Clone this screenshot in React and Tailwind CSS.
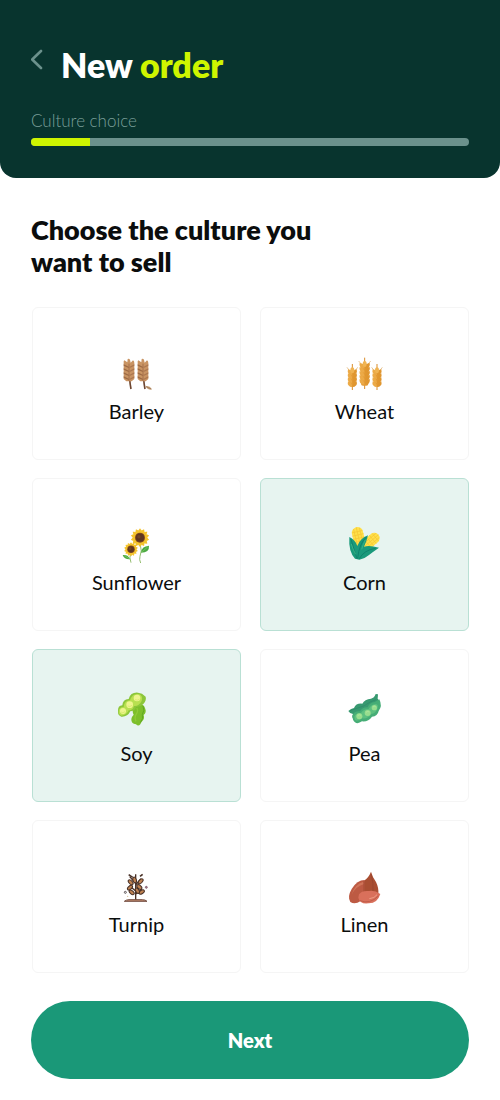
import { useState } from "react";

function CropIcon({ viewBox, children }) {
  return (
    <svg className="h-12 w-10" viewBox={viewBox} fill="none" aria-hidden="true">
      {children}
    </svg>
  );
}

function BarleyHead({ x }) {
  return (
    <g transform={`translate(${x} 0)`}>
      <path d="M0 90 Q1 105 4 120" stroke="#6d4630" strokeWidth="5" />
      <path d="M-18 42 Q-19 36 -16 34 L-7 40 L-6 30 Q-2 27 1 32 L3 41 L10 34 Q14 36 14 42 L14 90 L6 97 L-10 97 L-18 90 Z" fill="#c99463" />
      {[46, 58, 70, 82].map((y) => (
        <g key={y}>
          <path d={`M-18 ${y} L-3 ${y + 7} L-3 ${y + 11} L-18 ${y + 4} Z`} fill="#9d6944" />
          <path d={`M14 ${y} L0 ${y + 7} L0 ${y + 11} L14 ${y + 4} Z`} fill="#ac7750" />
        </g>
      ))}
      <path d="M-2 44 V96" stroke="#94623f" strokeWidth="2" />
    </g>
  );
}

function BarleyIcon() {
  return (
    <CropIcon viewBox="21 -15 120 144">
      <BarleyHead x={59} />
      <BarleyHead x={101} />
      <path d="M106 112 Q118 108 126 121 Q114 125 106 112 Z" fill="#c9a37a" />
      <path d="M108 113 L124 120" stroke="#93694a" strokeWidth="2" />
    </CropIcon>
  );
}

function WheatEar({ x, top, bottom, size }) {
  const rows = [];
  for (let y = top + 20; y < bottom - 8; y += 12) rows.push(y);
  return (
    <g>
      <path d={`M${x} ${top} V${bottom + 8}`} stroke="#d98c2b" strokeWidth="3" />
      <path
        d={`M${x - size - 4} ${top + 10} L${x - 3} ${top + 28} M${x + size + 4} ${top + 10} L${x + 3} ${top + 28}`}
        stroke="#d9a762"
        strokeWidth="2"
      />
      <rect x={x - size + 3} y={top + 18} width={size * 2 - 6} height={bottom - top - 20} rx="6" fill="#e39a35" />
      {rows.map((y) => (
        <g key={y}>
          <path
            d={`M${x} ${y + 13} Q${x - size - 5} ${y + 12} ${x - size - 1} ${y - 4} Q${x - 1} ${y - 2} ${x} ${y + 13} Z`}
            fill="#ecaa47"
          />
          <path
            d={`M${x} ${y + 13} Q${x + size + 5} ${y + 12} ${x + size + 1} ${y - 4} Q${x + 1} ${y - 2} ${x} ${y + 13} Z`}
            fill="#e0962f"
          />
        </g>
      ))}
      <ellipse cx={x} cy={top + 19} rx="6" ry="9" fill="#f0b453" />
    </g>
  );
}

function WheatIcon() {
  return (
    <CropIcon viewBox="25 -15 120 144">
      <WheatEar x={47} top={45} bottom={115} size={12} />
      <WheatEar x={121} top={45} bottom={115} size={12} />
      <WheatEar x={84} top={26} bottom={112} size={14} />
    </CropIcon>
  );
}

function Flower({ x, y, r }) {
  const petals = Array.from({ length: 14 }, (_, i) => (i * 360) / 14);
  return (
    <g transform={`translate(${x} ${y})`}>
      {petals.map((angle) => (
        <path
          key={angle}
          d={`M${-r * 0.25} ${-r * 0.4} Q${-r * 0.25} ${-r * 0.8} 0 ${-r} Q${r * 0.25} ${-r * 0.8} ${r * 0.25} ${-r * 0.4} Z`}
          fill="#f4c32d"
          transform={`rotate(${angle})`}
        />
      ))}
      <circle r={r * 0.54} fill="#8a4d1f" />
      <circle r={r * 0.44} fill="#5d3621" />
      <circle cx={-r * 0.12} cy={-r * 0.1} r={r * 0.18} fill="#744323" />
    </g>
  );
}

function SunflowerIcon() {
  return (
    <CropIcon viewBox="21 -12 120 144">
      <path d="M91 78 Q97 96 90 112 Q87 122 92 132" stroke="#94bd70" strokeWidth="3" />
      <path d="M62 102 Q57 116 63 131" stroke="#94bd70" strokeWidth="3" />
      <path d="M93 101 Q94 82 117 80 Q119 101 93 101 Z" fill="#4caa43" />
      <path d="M60 121 Q43 122 38 108 Q55 106 60 121 Z" fill="#4caa43" />
      <path d="M94 100 L113 84 M58 119 L43 110" stroke="#84cc63" strokeWidth="2" />
      <Flower x={90} y={56} r={28} />
      <Flower x={63} y={91} r={21} />
    </CropIcon>
  );
}

function CornIcon() {
  return (
    <CropIcon viewBox="25 -12 120 144">
      <g transform="rotate(-13 64 57)">
        <rect x="49" y="24" width="34" height="70" rx="17" fill="#ffe04a" />
        <path d="M57 28 V86 M66 24 V90 M75 28 V88 M50 38 H82 M49 48 H83 M49 58 H83 M49 68 H83" stroke="#f5c533" strokeWidth="2" />
      </g>
      <g transform="rotate(50 110 60)">
        <rect x="94" y="40" width="32" height="62" rx="16" fill="#ffe04a" />
        <path d="M102 43 V90 M110 40 V94 M118 43 V90 M95 52 H125 M94 62 H126 M94 72 H126 M94 82 H126" stroke="#f5c533" strokeWidth="2" />
      </g>
      <path d="M38 54 Q55 61 62 81 Q70 58 94 49 Q90 67 82 83 Q98 78 127 86 Q108 99 96 109 Q82 121 68 122 L55 119 Q35 98 38 54 Z" fill="#1a9a7b" />
      <path d="M61 119 Q51 88 43 61 M63 118 Q67 75 89 54 M68 119 Q82 93 117 88" stroke="#0b7665" strokeWidth="2" />
      <path d="M57 106 Q47 88 44 75 M75 91 Q79 77 86 63" stroke="#4ac08a" strokeWidth="2" />
    </CropIcon>
  );
}

function SoyIcon() {
  return (
    <CropIcon viewBox="33 6 120 144">
      <path d="M87 65 Q111 52 118 75 Q122 86 113 93 Q117 106 107 113 L103 121 Q97 128 90 121 Q75 120 76 105 Q77 98 83 92 Q76 80 87 65 Z" fill="#7dbf2b" />
      <path d="M111 66 Q117 80 109 91 Q113 104 103 116" stroke="#5fa823" strokeWidth="3" />
      <path d="M92 72 Q98 80 91 90 Q84 100 90 112" stroke="#8fca38" strokeWidth="4" />
      <path d="M36 82 Q35 64 49 64 Q50 46 68 45 Q74 24 96 26 L108 29 L119 38 Q122 49 112 60 Q102 70 90 69 Q86 82 73 82 Q65 99 46 98 Q35 95 36 82 Z" fill="#8cc63a" />
      <path d="M38 83 Q39 69 53 69 Q55 49 72 49 Q79 27 98 30 Q112 35 107 51 Q98 68 84 66 Q80 80 68 79 Q62 94 47 95 Q38 92 38 83 Z" fill="#b8e050" />
      <circle cx="51" cy="81" r="9" fill="#eef58e" />
      <circle cx="71" cy="62" r="10" fill="#eef58e" />
      <circle cx="93" cy="42" r="10" fill="#eef58e" />
      <path d="M45 84 Q50 89 57 83 M65 66 Q72 70 78 64 M87 47 Q94 51 101 45" stroke="#dcec72" strokeWidth="3" />
    </CropIcon>
  );
}

function PeaIcon() {
  return (
    <CropIcon viewBox="25 6 120 144">
      <path d="M35 81 Q43 74 52 72 Q58 57 77 59 Q84 45 103 44 Q113 42 117 30 L124 31 L123 44 Q132 53 125 67 L50 106 Q44 99 49 90 Q40 90 35 81 Z" fill="#379970" />
      <path d="M48 94 Q53 80 70 82 Q78 69 93 70 Q98 56 114 54 L128 46 Q138 66 126 81 Q123 97 106 98 Q95 114 76 112 Q58 125 49 107 Z" fill="#46ad76" />
      <path d="M53 98 Q58 86 73 87 Q80 75 96 75 Q103 62 117 60 Q127 61 122 76 Q116 88 104 90 Q94 105 77 103 Q63 114 55 107 Z" fill="#5dc080" />
      <circle cx="68" cy="97" r="9" fill="#97dd8e" />
      <circle cx="93" cy="87" r="9" fill="#97dd8e" />
      <circle cx="113" cy="71" r="8" fill="#97dd8e" />
      <path d="M63 95 Q68 90 73 94 M88 85 Q93 80 98 84 M109 69 Q113 65 117 68" stroke="#b6eaa5" strokeWidth="2" />
      <path d="M40 80 Q62 73 83 65 Q102 51 118 47" stroke="#2d8a66" strokeWidth="2" />
    </CropIcon>
  );
}

const turnipLeaves = [
  [62, 55, 45],
  [60, 71, -40],
  [65, 85, 40],
  [92, 52, -45],
  [88, 69, 40],
  [95, 84, -30],
  [74, 48, 70],
  [82, 80, 60],
];

function TurnipIcon() {
  return (
    <CropIcon viewBox="21 -21 120 144">
      <path d="M77 31 V108 M77 58 L59 38 M77 63 L93 44 M77 81 L58 65 M77 91 L96 75" stroke="#493127" strokeWidth="4" />
      <path d="M56 32 L68 40 M90 37 L98 31" stroke="#493127" strokeWidth="5" />
      {turnipLeaves.map(([x, y, angle]) => (
        <ellipse
          key={`${x}-${y}`}
          cx={x}
          cy={y}
          rx="9"
          ry="5"
          fill="#c08352"
          stroke="#493127"
          strokeWidth="3"
          transform={`rotate(${angle} ${x} ${y})`}
        />
      ))}
      <path d="M43 112 Q49 107 57 107 H97 Q106 107 111 112 Z" fill="#bd866a" stroke="#765044" strokeWidth="3" />
      <circle cx="46" cy="85" r="3" stroke="#5b5356" strokeWidth="3" />
      <circle cx="109" cy="70" r="3" fill="#b67b8e" stroke="#624653" strokeWidth="2" />
      <circle cx="53" cy="97" r="2" fill="#d3bd91" />
    </CropIcon>
  );
}

function LinenIcon() {
  return (
    <CropIcon viewBox="25 -21 120 144">
      <path d="M82 50 Q96 41 103 23 Q108 41 118 54 Q127 72 125 92 L109 115 L81 107 Z" fill="#a94e32" />
      <path d="M104 32 Q111 57 109 85" stroke="#9c472f" strokeWidth="3" />
      <path d="M84 48 Q61 48 45 75 Q31 99 41 114 Q55 123 72 111 L84 92 Z" fill="#bd5a43" />
      <path d="M80 53 Q54 60 45 92 Q56 68 82 60 Z" fill="#cf7459" />
      <path d="M82 52 V86" stroke="#a54a35" strokeWidth="3" />
      <path d="M67 91 Q75 79 97 81 Q114 78 131 90 Q122 119 95 118 Q69 121 65 101 Z" fill="#d9705b" />
      <path d="M70 110 Q100 122 125 96" stroke="#c05c49" strokeWidth="3" />
      <path d="M98 104 Q114 103 121 92" stroke="#ed9f87" strokeWidth="3" />
    </CropIcon>
  );
}

const cultures = [
  { name: "Barley", Icon: BarleyIcon },
  { name: "Wheat", Icon: WheatIcon },
  { name: "Sunflower", Icon: SunflowerIcon },
  { name: "Corn", Icon: CornIcon },
  { name: "Soy", Icon: SoyIcon },
  { name: "Pea", Icon: PeaIcon },
  { name: "Turnip", Icon: TurnipIcon },
  { name: "Linen", Icon: LinenIcon },
];

function Header() {
  return (
    <header className="rounded-b-2xl bg-[#08342e] px-[31px] pt-11 pb-8">
      <div className="flex items-start">
        <button type="button" aria-label="Back" className="mt-1 w-[30px] cursor-pointer text-[#6b918c]">
          <svg className="h-6 w-3" viewBox="0 0 12 24" fill="none" aria-hidden="true">
            <path d="M10 3 L1.2 11.5 L10 20" stroke="currentColor" strokeWidth="2.6" strokeLinecap="round" strokeLinejoin="round" />
          </svg>
        </button>
        <h1 className="text-[34px] leading-[42px] font-extrabold text-white">
          New <span className="text-[#cef500]">order</span>
        </h1>
      </div>
      <p className="mt-[23px] text-[17px] leading-6 font-light text-[#7a9f99]">Culture choice</p>
      <div
        role="progressbar"
        aria-label="Culture choice"
        aria-valuenow={13}
        aria-valuemin={0}
        aria-valuemax={100}
        className="mt-[5px] h-2 overflow-hidden rounded-full bg-[#6b918c]"
      >
        <div className="h-full bg-[#cef500]" style={{ width: "13.5%" }} />
      </div>
    </header>
  );
}

function App() {
  const [selected, setSelected] = useState(["Corn", "Soy"]);

  function toggle(name) {
    setSelected((prev) =>
      prev.includes(name) ? prev.filter((item) => item !== name) : [...prev, name]
    );
  }

  return (
    <div className="bg-white font-['Lato',sans-serif] text-[#0b0d0d]">
      <Header />
      <main className="px-[31px] pt-9 pb-[21px]">
        <h2 className="max-w-[320px] text-[27px] leading-8 font-extrabold">
          Choose the culture you want to sell
        </h2>
        <div className="mt-[29px] ml-px grid grid-cols-2 gap-x-[19px] gap-y-[18px]">
          {cultures.map(({ name, Icon }) => (
            <button
              key={name}
              type="button"
              aria-pressed={selected.includes(name)}
              onClick={() => toggle(name)}
              className={`flex h-[153px] cursor-pointer flex-col items-center rounded-md border pt-9 ${
                selected.includes(name)
                  ? "border-[#b9e0d4] bg-[#e7f4f0]"
                  : "border-[#f5f5f5] bg-white"
              }`}
            >
              <Icon />
              <span className="mt-[7px] text-xl leading-6">{name}</span>
            </button>
          ))}
        </div>
        <button
          type="button"
          className="mt-7 h-[78px] w-full cursor-pointer rounded-full bg-[#1a9878] text-xl font-extrabold text-white"
        >
          Next
        </button>
      </main>
    </div>
  );
}

export default App;
